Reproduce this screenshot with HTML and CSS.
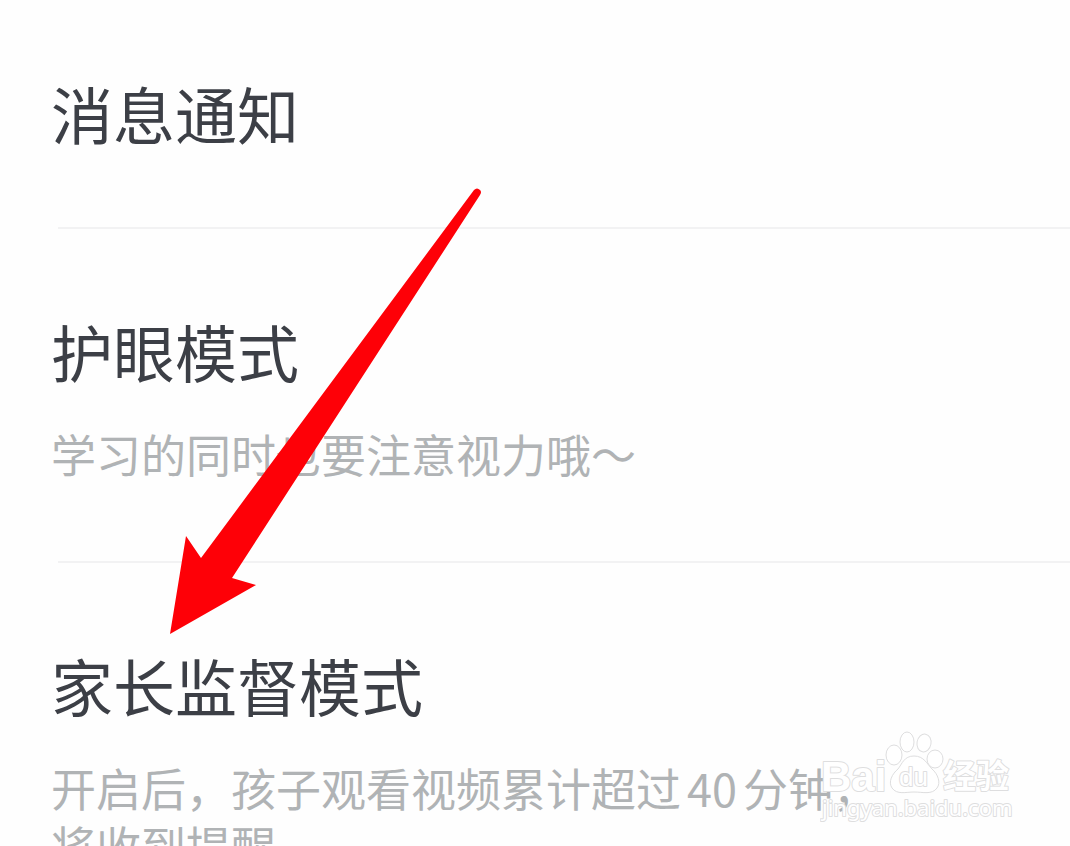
FILE: index.html
```
<!DOCTYPE html>
<html lang="zh-CN">
  <head>
    <meta charset="UTF-8" />
    <meta name="viewport" content="width=device-width, initial-scale=1.0" />
    <title>设置</title>
    <link rel="stylesheet" href="styles.css">
  </head>
  <body>
    <main class="settings">
      <section class="item item-first">
        <h2 class="title">消息通知</h2>
      </section>

      <section class="item">
        <h2 class="title">护眼模式</h2>
        <p class="desc">学习的同时也要注意视力哦～</p>
      </section>

      <section class="item">
        <h2 class="title">家长监督模式</h2>
        <p class="desc">开启后，孩子观看视频累计超过<span class="number">40</span>分钟，<br />将收到提醒</p>
      </section>

      <svg class="arrow" viewBox="0 0 320 450" aria-hidden="true">
        <path d="M305 5 Q308 2 311 5 Q313 7 311 10 L63 393 L87 400 L1 449 L17 351 L32 373 Z" />
      </svg>

      <svg class="watermark" viewBox="0 0 200 100">
        <g class="outline">
          <text class="brand" x="1" y="65">Bai</text>
          <ellipse cx="74" cy="29" rx="8" ry="10" />
          <ellipse cx="87" cy="16" rx="7" ry="10" />
          <ellipse cx="104" cy="17" rx="7" ry="9" transform="rotate(10 104 17)" />
          <ellipse cx="115" cy="33" rx="8" ry="9" />
          <path d="M94 30 C104 30 107 38 112 43 C118 48 121 57 117 62 C112 69 103 66 94 66 C86 66 77 69 72 62 C68 56 72 48 78 43 C82 38 84 30 94 30 Z" />
          <text class="paw-text" x="79" y="60">du</text>
          <text class="brand-cn" x="123" y="62">经验</text>
          <text class="site" x="2" y="90">jingyan.baidu.com</text>
        </g>
      </svg>
    </main>
  </body>
</html>
```

FILE: styles.css
```
body {
  margin: 0;
  background-color: #fefefe;
  font-family: "Noto Sans CJK SC", sans-serif;
}

.settings {
  position: relative;
  height: 100vh;
  overflow: hidden;
}

.item {
  padding: 84px 0 78px 51px;
}

.item-first {
  padding-top: 73px;
  padding-bottom: 74px;
}

/* divider, indented on the left only */
.item + .item::before {
  content: "";
  display: block;
  height: 2px;
  margin: -84px 0 82px 7px;
  background-color: #f2f2f3;
}

.title {
  margin: 0;
  font-size: 62px;
  font-weight: 400;
  line-height: 80px;
  color: #3c3f46;
}

.desc {
  margin: 34px 0 0;
  font-size: 45px;
  line-height: 58px;
  color: #b0b3b5;
  white-space: nowrap;
}

.number {
  margin: 0 6px;
}

.arrow {
  position: absolute;
  top: 185px;
  left: 169px;
  width: 320px;
  height: 450px;
  fill: #fe0007;
}

.watermark {
  position: absolute;
  top: 726px;
  right: 50px;
  width: 200px;
  height: 100px;
}

.outline {
  fill: #fff;
  stroke: #dededf;
  stroke-width: 1px;
}

.outline text {
  stroke-width: 2px;
  stroke-linejoin: round;
  paint-order: stroke;
}

.brand {
  font-family: "Liberation Sans", sans-serif;
  font-size: 42px;
  font-weight: 700;
}

.paw-text {
  font-family: "Liberation Sans", sans-serif;
  font-size: 26px;
}

.brand-cn {
  font-size: 33px;
  font-weight: 700;
}

.site {
  font-family: "Noto Sans", sans-serif;
  font-size: 22px;
}
```
